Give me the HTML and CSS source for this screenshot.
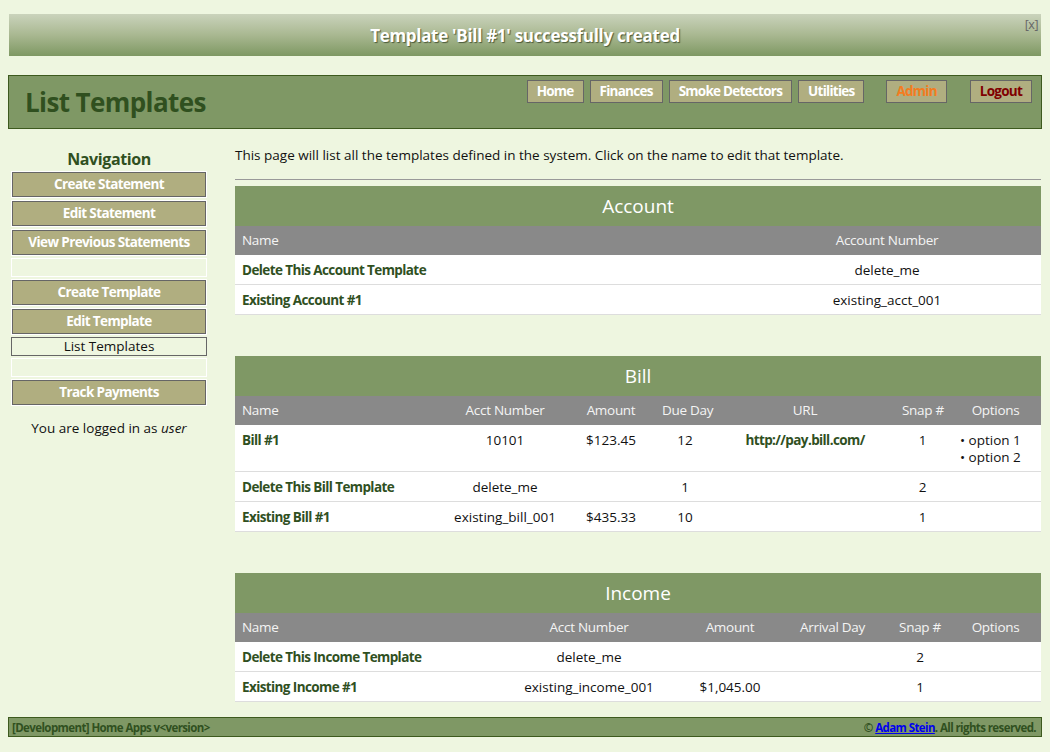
FILE: index.html
```html
<!DOCTYPE html>
<html lang="en">
<head>
<meta charset="utf-8">
<title>List Templates</title>
<link rel="stylesheet" href="styles.css">
</head>
<body>
<div class="flash">
  <span class="flash-text">Template 'Bill #1' successfully created</span>
  <a class="flash-close" href="#">[x]</a>
</div>

<header class="header">
  <h1 class="title">List Templates</h1>
  <nav class="topnav">
    <a class="topbtn" href="#">Home</a>
    <a class="topbtn" href="#">Finances</a>
    <a class="topbtn" href="#">Smoke Detectors</a>
    <a class="topbtn" href="#">Utilities</a>
    <a class="topbtn admin" href="#">Admin</a>
    <a class="topbtn logout" href="#">Logout</a>
  </nav>
</header>

<div class="layout">
  <aside class="sidebar">
    <h3 class="nav-title">Navigation</h3>
    <ul class="sidenav">
      <li class="item"><a href="#">Create Statement</a></li>
      <li class="item"><a href="#">Edit Statement</a></li>
      <li class="item"><a href="#">View Previous Statements</a></li>
      <li class="spacer"></li>
      <li class="item"><a href="#">Create Template</a></li>
      <li class="item"><a href="#">Edit Template</a></li>
      <li class="current">List Templates</li>
      <li class="spacer"></li>
      <li class="item"><a href="#">Track Payments</a></li>
    </ul>
    <p class="login">You are logged in as <em>user</em></p>
  </aside>

  <main class="main">
    <p class="intro">This page will list all the templates defined in the system. Click on the name to edit that template.</p>
    <hr class="rule">

    <table class="tpl">
      <colgroup><col class="c-acc-name"><col class="c-acc-num"></colgroup>
      <caption>Account</caption>
      <thead><tr><th class="left">Name</th><th>Account Number</th></tr></thead>
      <tbody>
        <tr><td class="left"><a href="#">Delete This Account Template</a></td><td>delete_me</td></tr>
        <tr><td class="left"><a href="#">Existing Account #1</a></td><td>existing_acct_001</td></tr>
      </tbody>
    </table>

    <table class="tpl">
      <colgroup><col class="c-b1"><col class="c-b2"><col class="c-b3"><col class="c-b4"><col class="c-b5"><col class="c-b6"><col class="c-b7"></colgroup>
      <caption>Bill</caption>
      <thead><tr><th class="left">Name</th><th>Acct Number</th><th>Amount</th><th>Due Day</th><th>URL</th><th>Snap #</th><th>Options</th></tr></thead>
      <tbody>
        <tr><td class="left"><a href="#">Bill #1</a></td><td>10101</td><td>$123.45</td><td>12</td><td><a href="#">http://pay.bill.com/</a></td><td>1</td><td class="left"><ul class="options"><li>option 1</li><li>option 2</li></ul></td></tr>
        <tr><td class="left"><a href="#">Delete This Bill Template</a></td><td>delete_me</td><td></td><td>1</td><td></td><td>2</td><td></td></tr>
        <tr><td class="left"><a href="#">Existing Bill #1</a></td><td>existing_bill_001</td><td>$435.33</td><td>10</td><td></td><td>1</td><td></td></tr>
      </tbody>
    </table>

    <table class="tpl">
      <colgroup><col class="c-i1"><col class="c-i2"><col class="c-i3"><col class="c-i4"><col class="c-i5"><col class="c-i6"></colgroup>
      <caption>Income</caption>
      <thead><tr><th class="left">Name</th><th>Acct Number</th><th>Amount</th><th>Arrival Day</th><th>Snap #</th><th>Options</th></tr></thead>
      <tbody>
        <tr><td class="left"><a href="#">Delete This Income Template</a></td><td>delete_me</td><td></td><td></td><td>2</td><td></td></tr>
        <tr><td class="left"><a href="#">Existing Income #1</a></td><td>existing_income_001</td><td>$1,045.00</td><td></td><td>1</td><td></td></tr>
      </tbody>
    </table>
  </main>
</div>

<footer class="footer">
  <span>[Development] Home Apps v&lt;version&gt;</span>
  <span>&copy; <a href="#">Adam Stein</a>. All rights reserved.</span>
</footer>
</body>
</html>
```

FILE: styles.css
```css
* { box-sizing: border-box; }

body {
  margin: 8px;
  background: #eef6e0;
  font-family: "Open Sans", "Noto Sans", "DejaVu Sans", sans-serif;
  font-size: 13.5px;
  line-height: 17px;
  color: #111;
}

a { text-decoration: none; }

/* flash banner */
.flash {
  position: relative;
  margin: 6px 1px 0;
  height: 42px;
  background: linear-gradient(to bottom, #cad3bc 0%, #a9b891 50%, #7e9863 100%);
  display: flex;
  align-items: center;
  justify-content: center;
}
.flash-text {
  color: #fff;
  font-weight: bold;
  font-size: 17px;
  letter-spacing: -0.3px;
  text-shadow: 1px 1px 1px #4b5a3a;
}
.flash-close {
  position: absolute;
  right: 3px;
  top: 2px;
  font-size: 12.5px;
  letter-spacing: -0.5px;
  color: #666;
}

/* header */
.header {
  margin-top: 19px;
  height: 54px;
  border: 1px solid #3d5a1e;
  background: #7f9865;
  display: flex;
  justify-content: space-between;
  align-items: flex-start;
}
.title {
  margin: 10px 0 0 16px;
  font-size: 26px;
  line-height: 32px;
  letter-spacing: -0.6px;
  font-weight: bold;
  color: #30501f;
}
.topnav {
  display: flex;
  gap: 6px;
  margin: 4px 9px 0 0;
}
.topbtn {
  display: block;
  height: 23px;
  line-height: 21px;
  padding: 0 9px;
  border: 1px solid #666;
  background: #b0ae80;
  color: #fff;
  font-weight: bold;
  letter-spacing: -0.75px;
}
.topbtn.admin { color: #f47c20; margin-left: 16px; }
.topbtn.logout { color: #800000; margin-left: 17px; }

/* layout */
.layout {
  display: flex;
  align-items: flex-start;
  margin-top: 15px;
}
.sidebar {
  width: 196px;
  margin-left: 3px;
  flex: none;
}
.nav-title {
  margin: 5px 0 2px;
  text-align: center;
  font-size: 16px;
  line-height: 20px;
  letter-spacing: -0.4px;
  font-weight: bold;
  color: #30501f;
}
.sidenav {
  list-style: none;
  margin: 0;
  padding: 0;
}
.sidenav li { margin-bottom: 2px; }
.sidenav .item {
  border: 1px solid #fff;
}
.sidenav .item a {
  display: block;
  height: 25px;
  line-height: 23px;
  border: 1px solid #666;
  background: #b0ae80;
  color: #fff;
  font-weight: bold;
  letter-spacing: -0.6px;
  text-align: center;
}
.sidenav .spacer {
  height: 19px;
  border: 1px solid #fff;
}
.sidenav .current {
  height: 19px;
  line-height: 17px;
  border: 1px solid #666;
  text-align: center;
  color: #111;
}
.login {
  margin: 14px 0 0;
  text-align: center;
}

.main {
  width: 806px;
  margin-left: 28px;
  flex: none;
}
.intro {
  margin: 3px 0 0;
}
.rule {
  margin: 15px 0 6px;
  border: 0;
  border-top: 1px solid #999;
  height: 0;
}

/* tables */
.tpl {
  width: 806px;
  table-layout: fixed;
  border-collapse: collapse;
  margin-bottom: 41px;
}
.tpl:last-child { margin-bottom: 15px; }
.tpl caption {
  height: 40px;
  line-height: 40px;
  background: #7f9865;
  color: #fff;
  font-size: 19px;
}
.tpl th {
  padding: 6px 7px;
  background: #898989;
  color: #f4f4f4;
  font-weight: normal;
  letter-spacing: -0.3px;
  text-align: center;
  white-space: nowrap;
}
.tpl td {
  padding: 7px 7px 5px;
  background: #fff;
  border-bottom: 1px solid #ddd;
  text-align: center;
  vertical-align: top;
  white-space: nowrap;
}
.tpl .left { text-align: left; }
.tpl td a {
  color: #30501f;
  font-weight: bold;
  letter-spacing: -0.6px;
}
.options {
  list-style: none;
  margin: 0;
  padding: 0 0 0 3px;
}
.options li::before { content: "\2022\00a0"; }

.c-acc-name { width: 498px; }
.c-acc-num { width: 308px; }

.c-b1 { width: 208px; }
.c-b2 { width: 124px; }
.c-b3 { width: 88px; }
.c-b4 { width: 60px; }
.c-b5 { width: 180px; }
.c-b6 { width: 55px; }
.c-b7 { width: 91px; }

.c-i1 { width: 258px; }
.c-i2 { width: 192px; }
.c-i3 { width: 90px; }
.c-i4 { width: 115px; }
.c-i5 { width: 60px; }
.c-i6 { width: 91px; }

/* footer */
.footer {
  height: 20px;
  border: 1px solid #3d5a1e;
  background: #7f9865;
  display: flex;
  justify-content: space-between;
  align-items: center;
  padding: 0 5px 0 3px;
  font-size: 11.5px;
  letter-spacing: -0.6px;
  font-weight: bold;
  color: #30501f;
}
.footer a {
  color: #0000ee;
  text-decoration: underline;
}
```
